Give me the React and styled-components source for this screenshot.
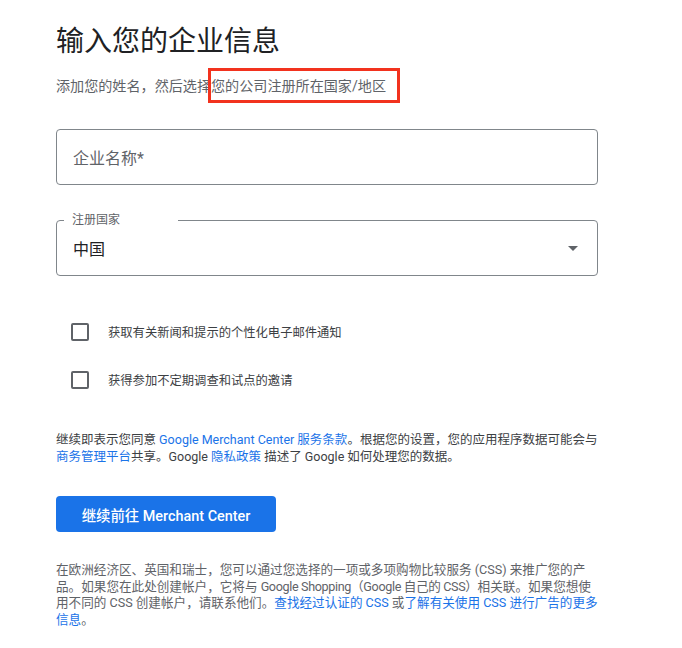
import React from 'react';
import styled, { createGlobalStyle } from 'styled-components';

const GlobalStyle = createGlobalStyle`
  html, body {
    margin: 0;
    padding: 0;
    background: #fff;
  }
  body {
    font-family: Roboto, "Noto Sans CJK SC", "Noto Sans", sans-serif;
    color: #202124;
  }
`;

const Page = styled.div`
  width: 542px;
  padding: 24px 84px 24px 56px;
`;

const Title = styled.h1`
  margin: 0;
  font-size: 28px;
  font-weight: 400;
  line-height: 36px;
  color: #202124;
`;

const Subtitle = styled.p`
  margin: 16px 0 0;
  font-size: 14.1px;
  line-height: 20px;
  color: #5f6368;
`;

// red annotation frame drawn over the subtitle
const Marked = styled.span`
  position: relative;

  &::after {
    content: '';
    position: absolute;
    top: -10px;
    bottom: -9px;
    left: -3px;
    right: -14px;
    border: 3px solid #f2321e;
    pointer-events: none;
  }
`;

const Field = styled.div`
  position: relative;
  box-sizing: border-box;
  height: 56px;
  margin-top: ${(p) => p.$gap}px;
  border: 1px solid #80868b;
  border-radius: 4px;
  display: flex;
  align-items: center;
  justify-content: space-between;
  padding: 0 19px 0 16px;
  font-size: 16px;
  color: ${(p) => (p.$placeholder ? '#5f6368' : '#202124')};
`;

const FloatLabel = styled.span`
  position: absolute;
  top: -9px;
  left: 7px;
  width: 114px;
  box-sizing: border-box;
  padding-left: 8px;
  background: #fff;
  font-size: 12px;
  line-height: 16px;
  color: #5f6368;
`;

const Caret = styled.span`
  width: 0;
  height: 0;
  border-left: 5px solid transparent;
  border-right: 5px solid transparent;
  border-top: 5px solid #5f6368;
  margin-top: 1px;
`;

const Options = styled.div`
  margin-top: 32px;
  display: flex;
  flex-direction: column;
`;

const OptionRow = styled.label`
  height: 48px;
  display: flex;
  align-items: center;
  gap: 19px;
  padding-left: 15px;
  font-size: 12.3px;
  color: #3c4043;
`;

const Box = styled.span`
  box-sizing: border-box;
  width: 18px;
  height: 18px;
  border: 2px solid #5f6368;
  border-radius: 2px;
  flex-shrink: 0;
`;

const Note = styled.p`
  margin: ${(p) => p.$gap}px 0 0;
  font-size: ${(p) => p.$size}px;
  line-height: 16.5px;
  color: ${(p) => p.$color};
`;

// the reference sets the mixed latin/paren run a touch tighter
const Tight = styled.span`
  letter-spacing: -0.35px;
`;

const Link = styled.a`
  color: #1a73e8;
  text-decoration: none;
`;

const Primary = styled.button`
  display: block;
  margin-top: 31px;
  width: 220px;
  height: 36px;
  border: none;
  border-radius: 4px;
  background: #1a73e8;
  color: #fff;
  font-family: inherit;
  font-size: 14.4px;
  font-weight: 500;
  cursor: pointer;
`;

const options = ['获取有关新闻和提示的个性化电子邮件通知', '获得参加不定期调查和试点的邀请'];

export default function App() {
  return (
    <>
      <GlobalStyle />
      <Page>
        <Title>输入您的企业信息</Title>
        <Subtitle>
          添加您的姓名，然后选择<Marked>您的公司注册所在国家/地区</Marked>
        </Subtitle>

        <Field $gap={33} $placeholder>
          企业名称*
        </Field>

        <Field $gap={35}>
          <FloatLabel>注册国家</FloatLabel>
          中国
          <Caret />
        </Field>

        <Options>
          {options.map((text) => (
            <OptionRow key={text}>
              <Box />
              {text}
            </OptionRow>
          ))}
        </Options>

        <Note $gap={28} $size={12.5} $color="#3c4043">
          继续即表示您同意 <Link href="#">Google Merchant Center 服务条款</Link>。根据您的设置，您的应用程序数据可能会与
          <Link href="#">商务管理平台</Link>共享。Google <Link href="#">隐私政策</Link> 描述了 Google 如何处理您的数据。
        </Note>

        <Primary>继续前往 Merchant Center</Primary>

        <Note $gap={30} $size={12.6} $color="#5f6368">
          在欧洲经济区、英国和瑞士，您可以通过您选择的一项或多项购物比较服务 (CSS) 来推广您的产品。如果您在此处创建帐户，它将与 <Tight>Google Shopping（Google 自己的 CSS）</Tight>相关联。如果您想使用不同的 CSS 创建帐户，请联系他们。
          <Link href="#">查找经过认证的 CSS</Link> 或<Link href="#">了解有关使用 CSS 进行广告的更多信息</Link>。
        </Note>
      </Page>
    </>
  );
}
